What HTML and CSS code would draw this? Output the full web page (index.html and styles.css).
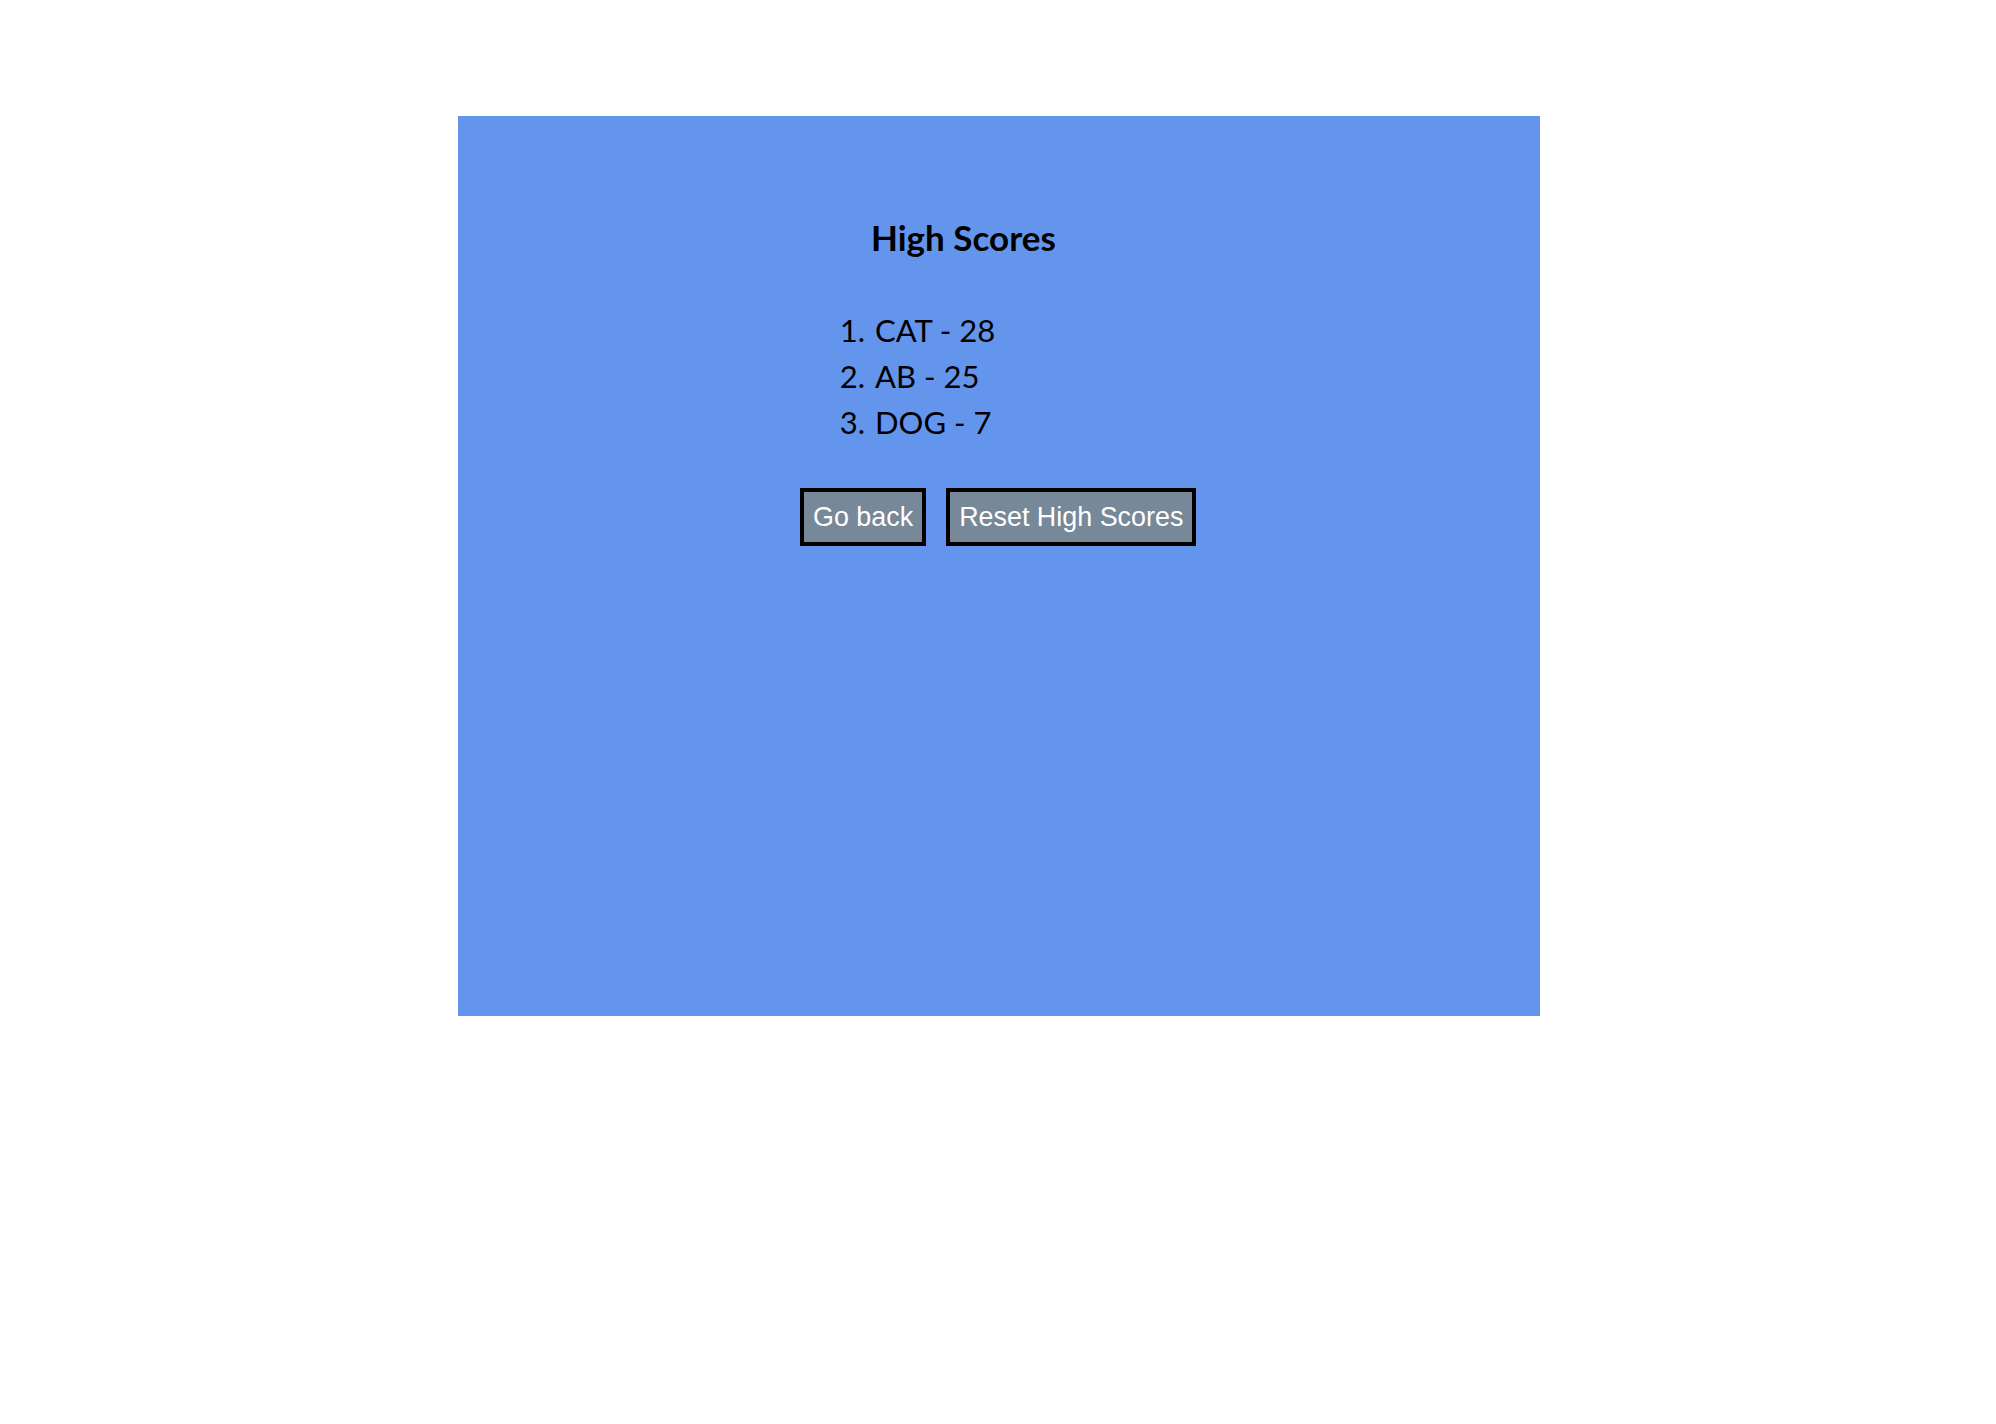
FILE: index.html
```html
<!DOCTYPE html>
<html>
<head>
<meta charset="utf-8">
<title>High Scores</title>
<link rel="stylesheet" href="styles.css">
</head>
<body>
<main class="card">
  <section class="scores">
    <h1 class="title">High Scores</h1>
    <ol class="list">
      <li>CAT - 28</li>
      <li>AB - 25</li>
      <li>DOG - 7</li>
    </ol>
    <div class="actions">
      <button class="btn">Go back</button>
      <button class="btn">Reset High Scores</button>
    </div>
  </section>
</main>
</body>
</html>
```

FILE: styles.css
```css
html, body {
  margin: 0;
  padding: 0;
  background: #ffffff;
}
body {
  font-family: "Lato", "Liberation Sans", sans-serif;
  color: #000;
}
.card {
  width: 1082px;
  height: 900px;
  margin: 116px 456px 0 458px;
  background: #6495ed;
  box-sizing: border-box;
  padding-top: 101px;
}
.scores {
  width: 398px;
  margin: 0 auto;
  display: flex;
  flex-direction: column;
}
.title {
  margin: 0;
  padding-left: 71px;
  font-size: 35px;
  font-weight: 700;
  line-height: 40px;
}
.list {
  margin: 50px 0 0;
  padding-left: 75px;
  font-size: 31px;
  line-height: 46px;
}
.list li::marker {
  content: counter(list-item) ". \200A";
}
.actions {
  display: flex;
  gap: 20px;
  margin-top: 43px;
}
.btn {
  font-family: "Liberation Sans", Arial, sans-serif;
  font-size: 26.9px;
  line-height: 30px;
  color: #fff;
  background: #778899;
  border: 4px solid #000;
  padding: 10px 9px;
  margin: 0;
}
```
